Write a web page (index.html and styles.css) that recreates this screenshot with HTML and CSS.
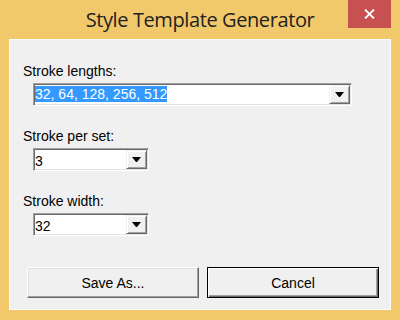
FILE: index.html
```html
<!DOCTYPE html>
<html lang="en">
<head>
  <meta charset="UTF-8">
  <meta name="viewport" content="width=device-width, initial-scale=1.0">
  <title>Style Template Generator</title>
  <link rel="stylesheet" href="styles.css">
</head>
<body>
  <div class="window">
    <div class="titlebar">
      <div></div>
      <div class="title">Style Template Generator</div>
      <button class="close" aria-label="Close">
        <svg width="11" height="10" viewBox="0 0 11 10">
          <path d="M1 0.5 L10 9.5 M10 0.5 L1 9.5" stroke="#fff" stroke-width="1.8" fill="none"/>
        </svg>
      </button>
    </div>
    <div class="client">
      <div class="field">
        <label>Stroke lengths:</label>
        <div class="combo wide">
          <div class="combo-value"><span class="selected">32, 64, 128, 256, 512</span></div>
          <div class="combo-btn">
            <svg width="9" height="5" viewBox="0 0 9 5"><polygon points="0,0 9,0 5,5 4,5" fill="#000"/></svg>
          </div>
        </div>
      </div>
      <div class="field">
        <label>Stroke per set:</label>
        <div class="combo">
          <div class="combo-value">3</div>
          <div class="combo-btn">
            <svg width="9" height="5" viewBox="0 0 9 5"><polygon points="0,0 9,0 5,5 4,5" fill="#000"/></svg>
          </div>
        </div>
      </div>
      <div class="field">
        <label>Stroke width:</label>
        <div class="combo">
          <div class="combo-value">32</div>
          <div class="combo-btn">
            <svg width="9" height="5" viewBox="0 0 9 5"><polygon points="0,0 9,0 5,5 4,5" fill="#000"/></svg>
          </div>
        </div>
      </div>
      <div class="buttons">
        <button class="btn">Save As...</button>
        <button class="btn default">Cancel</button>
      </div>
    </div>
  </div>
</body>
</html>
```

FILE: styles.css
```css
body {
  margin: 0;
  font-family: "Liberation Sans", Arial, sans-serif;
  font-size: 14px;
  color: #000;
}
.window {
  width: 400px;
  height: 320px;
  box-sizing: border-box;
  background: #f1c96b;
  display: flex;
  flex-direction: column;
}
.titlebar {
  height: 39px;
  display: grid;
  grid-template-columns: 1fr auto 1fr;
  align-items: start;
}
.title {
  font-family: "Open Sans", "Noto Sans", sans-serif;
  font-size: 20px;
  letter-spacing: -0.4px;
  color: #222;
  line-height: 38px;
  padding-top: 1px;
}
.close {
  justify-self: end;
  margin-right: 9px;
  width: 43px;
  height: 28px;
  border: none;
  padding: 0;
  background: #c75050;
  display: flex;
  align-items: center;
  justify-content: center;
}
.client {
  flex: 1;
  margin: 0 9px 10px;
  background: #f0f0f0;
  border: 1px solid #fbfbfb;
  padding: 23px 11px 11px 13px;
  display: flex;
  flex-direction: column;
}
.field {
  margin-bottom: 22px;
}
.field label {
  display: block;
  line-height: 16px;
  margin-bottom: 4px;
}
.combo {
  display: flex;
  width: 116px;
  height: 23px;
  margin-left: 10px;
  box-sizing: border-box;
  border: 1px solid;
  border-color: #a0a0a0 #fff #fff #a0a0a0;
  box-shadow: inset 1px 1px 0 #696969, inset -1px -1px 0 #e3e3e3;
  background: #fff;
  padding: 1px;
}
.combo.wide {
  width: 319px;
}
.combo-value {
  flex: 1;
  line-height: 16px;
  padding-top: 3px;
  white-space: nowrap;
}
.combo.wide .combo-value {
  padding-top: 1px;
}
.selected {
  display: inline-block;
  background: #3399ff;
  color: #fff;
}
.combo-btn {
  width: 21px;
  box-sizing: border-box;
  background: #f0f0f0;
  border: 1px solid;
  border-color: #f0f0f0 #696969 #696969 #f0f0f0;
  box-shadow: inset 1px 1px 0 #fff, inset -1px -1px 0 #a0a0a0;
  display: flex;
  align-items: center;
  justify-content: center;
}
.buttons {
  margin-top: auto;
  margin-left: 4px;
  display: flex;
  gap: 8px;
}
.btn {
  flex: 1;
  height: 31px;
  font-family: "Liberation Sans", Arial, sans-serif;
  font-size: 14px;
  color: #000;
  background: #f0f0f0;
  border: 1px solid;
  border-color: #fff #696969 #696969 #fff;
  box-shadow: inset -1px -1px 0 #a0a0a0, inset 1px 1px 0 #e3e3e3;
  padding: 0;
}
.btn.default {
  border-color: #000;
  box-shadow: inset 1px 1px 0 #fff, inset -1px -1px 0 #696969, inset -2px -2px 0 #a0a0a0;
}
```
